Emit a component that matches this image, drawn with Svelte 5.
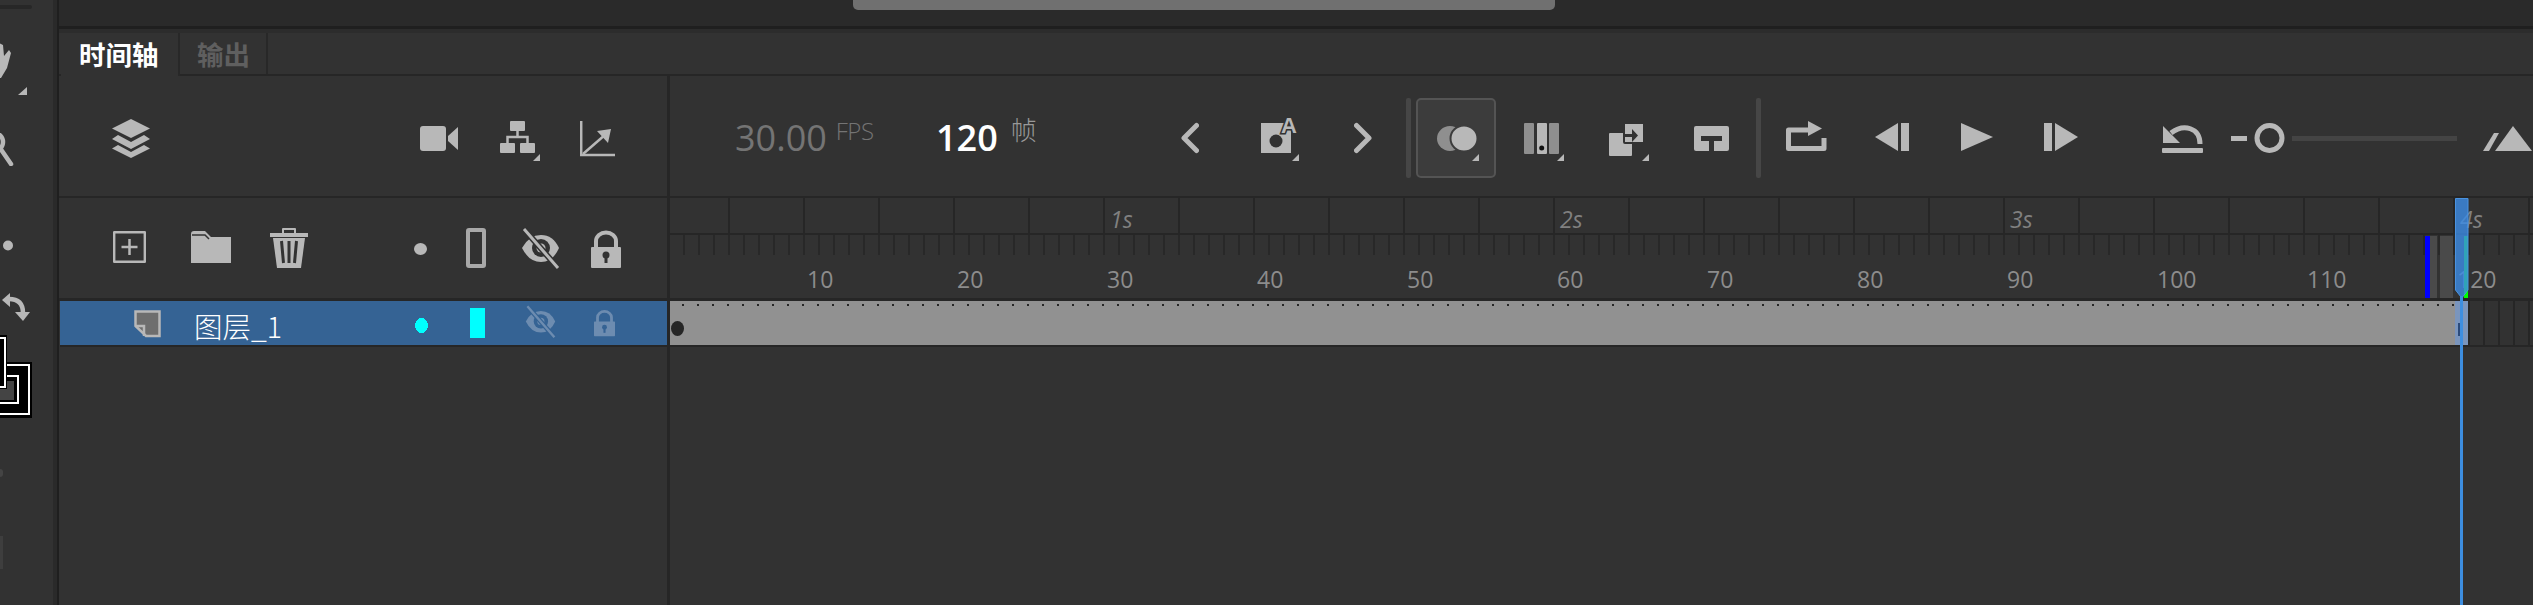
<script>
  const frameLabels = [10, 20, 30, 40, 50, 60, 70, 80, 90, 100, 110, 120];
  const secondLabels = ['1s', '2s', '3s', '4s'];
</script>

{#snippet corner(x, y)}
  <polygon class="tri" points="{x + 7},{y} {x + 7},{y + 7} {x},{y + 7}" />
{/snippet}

{#snippet eye()}
  <path class="fill" d="M1 22 Q8 9 20 9 Q32 9 38 22 Q32 36 20 36 Q8 36 1 22 Z" />
  <circle class="cut" cx="20" cy="22" r="9" />
  <circle class="fill" cx="20" cy="22" r="4.5" />
  <line class="cut-line" x1="3" y1="3" x2="37" y2="42" />
  <line class="slash" x1="3" y1="3" x2="37" y2="42" />
{/snippet}

{#snippet lock()}
  <path class="shackle" d="M5 22 V15 a10 8.5 0 0 1 20 0 V22" />
  <rect class="fill" x="0" y="21" width="30" height="21" rx="1" />
  <circle class="cut" cx="15" cy="29" r="3.5" />
  <rect class="cut" x="13.5" y="30" width="3" height="7" />
{/snippet}

<div class="app">
  <aside class="tools">
    <div class="pill"></div>
    <svg class="t-brush" width="30" height="53" viewBox="0 0 30 53">
      <polygon class="fill" points="-1,1 3,3 4,14 9,8 11,11 7,26 1,36 -1,36" />
      <polygon class="tri" points="27,45 27,53 18,53" />
    </svg>
    <svg class="t-mag" width="20" height="33" viewBox="0 0 20 33">
      <circle class="stroke4" cx="-6" cy="9" r="9" />
      <line class="stroke4" x1="0" y1="15" x2="11" y2="31" />
    </svg>
    <svg class="t-dot" width="14" height="11" viewBox="0 0 14 11"><ellipse class="fill" cx="8" cy="5.5" rx="5" ry="5" /></svg>
    <svg class="t-swap" width="32" height="28" viewBox="0 0 32 28">
      <polygon class="fill" points="2,7 10,0 10,14" />
      <path class="stroke4" d="M9 6 Q23 6 23 20" />
      <polygon class="fill" points="15,19 30,19 23,28" />
    </svg>
    <svg class="t-boxes" width="33" height="83" viewBox="0 0 33 83">
      <rect x="-20" y="27" width="52" height="56" fill="#000" />
      <rect x="-20" y="30" width="49" height="49" fill="none" stroke="#fff" stroke-width="2" />
      <rect x="-20" y="41" width="38" height="27" fill="none" stroke="#fff" stroke-width="2" />
      <rect x="-20" y="46" width="34" height="19" fill="#444" />
      <rect x="-20" y="0" width="27" height="54" fill="#000" />
      <rect x="-20" y="3" width="25" height="49" fill="none" stroke="#fff" stroke-width="2" />
    </svg>
    <div class="faint-dot"></div>
    <div class="faint-bar"></div>
  </aside>
  <div class="rail"></div>

  <main class="panel">
    <div class="top-strip"><div class="thumb"></div></div>

    <div class="tabs">
      <div class="tab active">时间轴</div>
      <div class="tab">输出</div>
    </div>

    <section class="header">
      <div class="head-left">
        <svg class="i-layers" width="38" height="64" viewBox="0 0 38 64">
          <polygon class="fill" points="19,13 38,22.5 19,32 0,22.5" />
          <polygon class="fill" points="6,29 19,36 32,29 38,33 19,43 0,33" />
          <polygon class="fill" points="6,39 19,46 32,39 38,42.5 19,52 0,42.5" />
        </svg>
        <svg class="i-camera" width="38" height="64" viewBox="0 0 38 64">
          <rect class="fill" x="0" y="20" width="26" height="25" rx="3" />
          <polygon class="fill" points="28,30 38,21 38,44 28,35" />
        </svg>
        <svg class="i-tree" width="40" height="64" viewBox="0 0 40 64">
          <rect class="fill" x="10" y="15" width="15" height="10" rx="1" />
          <rect class="fill" x="0" y="37" width="15" height="10" rx="1" />
          <rect class="fill" x="20" y="37" width="15" height="10" rx="1" />
          <path class="line2" d="M17.5 25 V31 M7.5 37 V31 H27.5 V37" />
          {@render corner(33, 48)}
        </svg>
        <svg class="i-graph" width="35" height="64" viewBox="0 0 35 64">
          <path class="line2" d="M1.2 15 V49 H35" />
          <line class="line2" x1="3" y1="48" x2="26" y2="28" />
          <polygon class="fill" points="17,25 31,23 28,37" />
        </svg>
      </div>

      <div class="head-right">
        <div class="fps"><span class="fps-num">30.00</span><span class="fps-unit">FPS</span></div>
        <div class="count"><span class="count-num">120</span><span class="count-unit">帧</span></div>

        <svg class="i-prev" width="18" height="64" viewBox="0 0 18 64">
          <polyline class="chev" points="15.5,19.5 3,32 15.5,44.5" />
        </svg>
        <svg class="i-onion-a" width="38" height="64" viewBox="0 0 38 64">
          <rect class="fill" x="0" y="17" width="30" height="30" />
          <circle class="cut" cx="15" cy="35" r="6.5" />
          <text class="a-mark" x="28" y="27">A</text>
          {@render corner(31, 48)}
        </svg>
        <svg class="i-next" width="18" height="64" viewBox="0 0 18 64">
          <polyline class="chev" points="2.5,19.5 15,32 2.5,44.5" />
        </svg>
        <div class="sep s1"></div>
        <div class="onion-btn">
          <svg width="76" height="76" viewBox="0 0 76 76">
            <ellipse class="dim" cx="32" cy="38.5" rx="13" ry="12.5" />
            <ellipse class="fill front" cx="46" cy="38.5" rx="13.5" ry="13" />
            {@render corner(54, 54)}
          </svg>
        </div>
        <svg class="i-bars" width="40" height="64" viewBox="0 0 40 64">
          <rect class="dim" x="0" y="17" width="10" height="31" rx="1" />
          <rect class="fill" x="13" y="17" width="10" height="31" rx="1" />
          <rect class="dim" x="25" y="17" width="10" height="31" rx="1" />
          <circle class="black" cx="17.7" cy="42" r="2.5" />
          {@render corner(33, 48)}
        </svg>
        <svg class="i-copy" width="40" height="64" viewBox="0 0 40 64">
          <rect class="fill" x="0" y="27" width="23" height="23" rx="1" />
          <rect class="fill front" x="15" y="17" width="20" height="20" rx="1" />
          <polygon class="cut" points="15,28 23,28 23,23 29,29.5 23,36 23,31 15,31" />
          {@render corner(33, 48)}
        </svg>
        <svg class="i-arch" width="35" height="64" viewBox="0 0 35 64">
          <rect class="fill" x="0" y="20" width="35" height="25" rx="2" />
          <path class="cut" d="M7 30 H28 V35 H20 V45 H15 V35 H7 Z" />
        </svg>
        <div class="sep s2"></div>
        <svg class="i-export" width="41" height="64" viewBox="0 0 41 64">
          <path class="frame" d="M24 24 H2.5 V42.5 H38 V32" />
          <polygon class="fill" points="22,15 36,22.5 22,30" />
        </svg>
        <svg class="i-back" width="34" height="64" viewBox="0 0 34 64">
          <polygon class="fill" points="0,31 23,17 23,45" />
          <rect class="fill" x="26" y="17" width="8" height="28" />
        </svg>
        <svg class="i-play" width="32" height="64" viewBox="0 0 32 64">
          <polygon class="fill" points="0,17 32,31 0,45" />
        </svg>
        <svg class="i-fwd" width="34" height="64" viewBox="0 0 34 64">
          <rect class="fill" x="0" y="17" width="8" height="28" />
          <polygon class="fill" points="11,17 34,31 11,45" />
        </svg>
        <svg class="i-undo" width="41" height="64" viewBox="0 0 41 64">
          <rect class="fill" x="0" y="42" width="41" height="5" rx="1" />
          <polygon class="fill" points="1,20 1,37 18,37" />
          <path class="frame" d="M9 27 C22 17 38 22 38 38" />
        </svg>
        <div class="zoom-minus"></div>
        <svg class="i-ring" width="31" height="64" viewBox="0 0 31 64">
          <circle class="frame" cx="15.5" cy="32" r="12.5" />
        </svg>
        <div class="zoom-track"></div>
        <svg class="i-hills" width="50" height="64" viewBox="0 0 50 64">
          <polygon class="fill" points="0,45 11,27 16,27 6,45" />
          <polygon class="fill" points="30,20 49,45 12,45" />
        </svg>
      </div>
    </section>

    <section class="body">
      <div class="layers">
        <div class="layer-tools">
          <svg class="i-new" width="33" height="44" viewBox="0 0 33 44">
            <rect class="frame thin" x="1.2" y="6.2" width="30.6" height="29.6" />
            <path class="line2" d="M16.5 13 V29 M8.5 21 H24.5" />
          </svg>
          <svg class="i-folder" width="40" height="44" viewBox="0 0 40 44">
            <path class="fill" d="M0 8 Q0 5 3 5 H14 L20 11 H40 V37 H0 Z" />
            <path class="thin-cut" d="M1 9 H14 L18 13" />
          </svg>
          <svg class="i-trash" width="38" height="44" viewBox="0 0 38 44">
            <rect class="frame hair" x="13" y="3" width="12" height="6" />
            <rect class="fill" x="0" y="7" width="38" height="4" />
            <polygon class="fill" points="3,12 35,12 31,42 7,42" />
            <path class="slits" d="M11.5 15 L13.5 37 M19 15 V37 M26.5 15 L24.5 37" />
          </svg>
          <svg class="i-dot" width="13" height="44" viewBox="0 0 13 44"><ellipse class="fill" cx="6.5" cy="23" rx="6.5" ry="6" /></svg>
          <svg class="i-outline" width="20" height="44" viewBox="0 0 20 44">
            <rect class="frame outline" x="2" y="4" width="16" height="36" rx="1" />
          </svg>
          <svg class="i-eye" width="39" height="44" viewBox="0 0 39 44">{@render eye()}</svg>
          <svg class="i-lock" width="30" height="44" viewBox="0 0 30 44">{@render lock()}</svg>
        </div>

        <div class="layer-row">
          <svg class="i-page" width="27" height="44" viewBox="0 0 27 44">
            <path class="page" d="M1.5 10.5 H25.5 V35 H12 L1.5 25 Z" />
            <path class="page-fold" d="M1.5 25 H10 V35" />
          </svg>
          <div class="layer-name">图层_1</div>
          <svg class="i-cyan-dot" width="13" height="44" viewBox="0 0 13 44">
            <ellipse class="cyan" cx="6.5" cy="24.5" rx="6.5" ry="7.5" />
          </svg>
          <div class="cyan-box"></div>
          <svg class="i-eye-s" width="31" height="44" viewBox="0 2 39 44">{@render eye()}</svg>
          <svg class="i-lock-s" width="21" height="44" viewBox="0 -8 30 62">{@render lock()}</svg>
        </div>
      </div>

      <div class="timeline">
        <div class="seconds">
          {#each secondLabels as s}<span>{s}</span>{/each}
        </div>
        <div class="frames">
          {#each frameLabels as n}<span>{n}</span>{/each}
        </div>
        <div class="track">
          <div class="bar"><div class="key"></div></div>
        </div>

        <div class="mark blue"></div>
        <div class="mark grey-a"></div>
        <div class="mark grey-b"></div>
        <div class="mark green"></div>
        <div class="bar-tint"><div class="bar-tick"></div></div>
        <svg class="playhead-head" width="14" height="100" viewBox="0 0 14 100">
          <polygon points="0.5,0.5 13,0.5 13,92 6.8,100 0.5,92" />
        </svg>
        <div class="playhead-line"></div>
      </div>
    </section>
  </main>
</div>

<style>
  :global(body) {
    margin: 0;
    background: #323232;
  }

  .app {
    display: flex;
    width: 2533px;
    height: 605px;
    overflow: hidden;
    background: #323232;
    font-family: "Open Sans", "Noto Sans CJK SC", sans-serif;
  }

  svg {
    display: block;
    flex-shrink: 0;
    overflow: hidden;
  }

  .fill { fill: #b8b8b8; }
  .dim { fill: #8f8f8f; }
  .cut { fill: #323232; }
  .black { fill: #111; }
  .tri { fill: #b8b8b8; }
  .stroke4 { fill: none; stroke: #b8b8b8; stroke-width: 4.5; stroke-linecap: round; }
  .line2 { fill: none; stroke: #b8b8b8; stroke-width: 2.5; }
  .chev { fill: none; stroke: #b8b8b8; stroke-width: 5; stroke-linecap: round; stroke-linejoin: round; }
  .frame { fill: none; stroke: #b8b8b8; stroke-width: 5; stroke-linejoin: round; }
  .frame.thin { stroke-width: 2.4; }
  .frame.hair { stroke-width: 2; }
  .frame.outline { stroke-width: 4; stroke: #a8a8a8; }
  .front { stroke: #323232; stroke-width: 2; }
  .onion-btn .front { stroke: #3c3c3c; }
  .thin-cut { fill: none; stroke: #323232; stroke-width: 1.5; }
  .slits { fill: none; stroke: #323232; stroke-width: 3; }
  .a-mark {
    fill: #b8b8b8;
    stroke: #323232;
    stroke-width: 3px;
    paint-order: stroke;
    font: bold 22px "Liberation Sans", sans-serif;
    text-anchor: middle;
  }
  .shackle { fill: none; stroke: #b8b8b8; stroke-width: 4; }
  .slash { stroke: #b8b8b8; stroke-width: 3; }
  .cut-line { stroke: #323232; stroke-width: 6; }

  /* tools strip, cropped at the left edge */
  .tools {
    width: 53px;
    flex-shrink: 0;
    display: flex;
    flex-direction: column;
  }
  .pill {
    width: 32px;
    height: 4px;
    margin-top: 5px;
    background: #272727;
    border-radius: 0 2px 2px 0;
  }
  .t-brush { margin-top: 33px; }
  .t-mag { margin-top: 38px; }
  .t-dot { margin-top: 74px; }
  .t-swap { margin-top: 42px; }
  .t-boxes { margin-top: 14px; }
  .faint-dot {
    width: 3px;
    height: 8px;
    margin-top: 51px;
    background: #444;
    border-radius: 0 3px 3px 0;
  }
  .faint-bar {
    width: 3px;
    height: 33px;
    margin-top: 59px;
    background: #3e3e3e;
  }
  .rail {
    width: 4px;
    flex-shrink: 0;
    background: #2a2a2a;
    border-right: 2px solid #1f1f1f;
  }

  .panel {
    flex: 1;
    min-width: 0;
    display: flex;
    flex-direction: column;
  }

  .top-strip {
    height: 26px;
    background: #2a2a2a;
    border-bottom: 3px solid #1f1f1f;
    padding-left: 794px;
  }
  .thumb {
    width: 702px;
    height: 10px;
    background: #707070;
    border-radius: 0 0 5px 5px;
  }

  .tabs {
    display: flex;
    height: 41px;
    padding: 4px 0 0 2px;
    background: linear-gradient(#2c2c2c 0 4px, #323232 4px);
    border-bottom: 2px solid #262626;
  }
  .tab {
    width: 88px;
    height: 41px;
    padding-left: 17px;
    box-sizing: border-box;
    background: #323232;
    border-right: 2px solid #282828;
    color: #5f5f5f;
    font: bold 26.5px/41px "Noto Sans CJK SC", sans-serif;
  }
  .tab.active {
    width: 119px;
    height: 43px;
    color: #fff;
    padding-left: 18px;
  }

  .header {
    display: flex;
    height: 122px;
    box-sizing: border-box;
    padding-top: 4px;
    border-bottom: 2px solid #262626;
  }
  .head-left {
    width: 608px;
    flex-shrink: 0;
    margin-top: -4px;
    padding-top: 4px;
    display: flex;
    align-items: center;
    border-right: 3px solid #262626;
  }
  .i-layers { margin-left: 53px; }
  .i-camera { margin-left: 270px; }
  .i-tree { margin-left: 42px; }
  .i-graph { margin-left: 40px; }

  .head-right {
    flex: 1;
    display: flex;
    align-items: center;
  }
  .fps {
    width: 200px;
    margin-left: 65px;
    flex-shrink: 0;
    display: flex;
    color: #747474;
  }
  .fps-num {
    font-size: 36px;
    line-height: 50px;
    font-weight: 500;
  }
  .fps-unit {
    font-size: 24px;
    line-height: 36px;
    margin-left: 9px;
    letter-spacing: -0.5px;
    font-weight: 300;
  }
  .count {
    width: 246px;
    flex-shrink: 0;
    display: flex;
    color: #fff;
  }
  .count-num {
    font-size: 36px;
    line-height: 50px;
    font-weight: 600;
    margin-left: 1px;
  }
  .count-unit {
    font: 300 26px/32px "Noto Sans CJK SC", sans-serif;
    margin-left: 13px;
    color: #999;
  }
  .i-onion-a { margin-left: 62px; }
  .i-next { margin-left: 55px; }
  .sep {
    width: 5px;
    height: 80px;
    background: #464646;
    border-radius: 2px;
    flex-shrink: 0;
  }
  .s1 { margin-left: 34px; }
  .s2 { margin-left: 27px; }
  .onion-btn {
    width: 80px;
    height: 80px;
    box-sizing: border-box;
    margin-left: 5px;
    flex-shrink: 0;
    background: #3c3c3c;
    border: 2px solid #545454;
    border-radius: 5px;
  }
  .i-bars { margin-left: 28px; }
  .i-copy { margin-left: 45px; }
  .i-arch { margin-left: 45px; }
  .i-export { margin-left: 25px; }
  .i-back { margin-left: 48px; }
  .i-play { margin-left: 52px; }
  .i-fwd { margin-left: 51px; }
  .i-undo { margin-left: 84px; }
  .zoom-minus {
    width: 16px;
    height: 5px;
    margin-left: 28px;
    background: #b8b8b8;
    flex-shrink: 0;
  }
  .i-ring { margin-left: 7px; }
  .zoom-track {
    width: 165px;
    height: 5px;
    margin-left: 7px;
    background: #444;
    flex-shrink: 0;
  }
  .i-hills { margin-left: 26px; }

  .body {
    flex: 1;
    display: flex;
    min-height: 0;
  }
  .layers {
    width: 608px;
    flex-shrink: 0;
    border-right: 3px solid #262626;
  }
  .layer-tools {
    display: flex;
    align-items: center;
    height: 100px;
    border-bottom: 3px solid #262626;
  }
  .i-new { margin-left: 54px; }
  .i-folder { margin-left: 45px; }
  .i-trash { margin-left: 39px; }
  .i-dot { margin-left: 106px; }
  .i-outline { margin-left: 39px; }
  .i-eye { margin-left: 35px; }
  .i-lock { margin-left: 31px; }

  .layer-row {
    display: flex;
    align-items: center;
    height: 44px;
    margin-left: 1px;
    background: #356394;
    border-bottom: 2px solid #262626;
  }
  .i-page { margin-left: 74px; }
  .page { fill: #6e6e6e; stroke: #b8b8b8; stroke-width: 2.5; }
  .page-fold { fill: none; stroke: #b8b8b8; stroke-width: 2.5; }
  .layer-name {
    width: 220px;
    margin-left: 33px;
    flex-shrink: 0;
    color: #fff;
    font: 300 28.5px/44px "Noto Sans CJK SC", sans-serif;
    padding-top: 3px;
    box-sizing: border-box;
    height: 44px;
  }
  .cyan { fill: #00ffff; }
  .i-cyan-dot { shape-rendering: crispEdges; margin-left: 1px; }
  .cyan-box {
    width: 15px;
    height: 30px;
    margin-left: 42px;
    background: #00ffff;
    flex-shrink: 0;
  }
  .i-eye-s { margin-left: 40px; }
  .i-eye-s .fill, .i-lock-s .fill { fill: #6d8cb0; }
  .i-eye-s .slash { stroke: #6d8cb0; }
  .i-eye-s .cut, .i-lock-s .cut { fill: #356394; }
  .i-eye-s .cut-line { stroke: #356394; }
  .i-lock-s { margin-left: 38px; }
  .i-lock-s .shackle { stroke: #6d8cb0; }

  /* frames side */
  .timeline {
    position: relative;
    flex: 1;
    min-width: 0;
    overflow: hidden;
  }
  .seconds {
    display: flex;
    height: 35px;
    padding-left: 440px;
    border-bottom: 2px solid #262626;
    background: linear-gradient(90deg, #262626 2px, transparent 2px) 58px 0 / 75px 100%;
    color: #808080;
    font-size: 23px;
    font-style: italic;
    line-height: 42px;
  }
  .seconds span {
    width: 450px;
    flex-shrink: 0;
  }
  .frames {
    display: flex;
    height: 63px;
    padding-left: 137px;
    background: linear-gradient(90deg, #282828 2px, transparent 2px) 13px 0 / 15px 20px repeat-x;
    color: #8c8c8c;
    font-size: 23px;
    line-height: 32px;
  }
  .frames span {
    width: 150px;
    flex-shrink: 0;
    padding-top: 28px;
  }
  .track {
    height: 44px;
    border-top: 3px solid #262626;
    border-bottom: 2px solid #262626;
    background: linear-gradient(90deg, #262626 2px, transparent 2px) 13px 0 / 15px 100%;
  }
  .bar {
    position: relative;
    width: 1785px;
    height: 44px;
    background: linear-gradient(90deg, #262626 2px, transparent 2px) 42px 3px / 15px 2px repeat-x, #919191;
  }
  .key {
    position: absolute;
    left: 1px;
    top: 20px;
    width: 13px;
    height: 15px;
    border-radius: 50%;
    background: #262626;
  }

  .mark {
    position: absolute;
    top: 38px;
    height: 62px;
  }
  .blue { left: 1755px; width: 5px; background: #0000ff; }
  .grey-a { left: 1760px; width: 7px; background: #4a4a4a; }
  .grey-b { left: 1770px; width: 13px; background: #4a4a4a; }
  .green { left: 1794px; width: 4px; background: #00ff00; }

  .bar-tint {
    position: absolute;
    left: 1785px;
    top: 103px;
    width: 13px;
    height: 44px;
    background: #7a95bd;
  }
  .bar-tick {
    position: absolute;
    left: 3px;
    top: 22px;
    width: 5px;
    height: 13px;
    background: #2b4a7a;
  }
  .playhead-head {
    position: absolute;
    left: 1785px;
    top: 0;
  }
  .playhead-head polygon {
    fill: rgba(60, 140, 230, 0.8);
    stroke: #4a93e0;
    stroke-width: 1;
  }
  .playhead-line {
    position: absolute;
    left: 1790px;
    top: 98px;
    bottom: 0;
    width: 3px;
    background: #3d8ee0;
  }
</style>
